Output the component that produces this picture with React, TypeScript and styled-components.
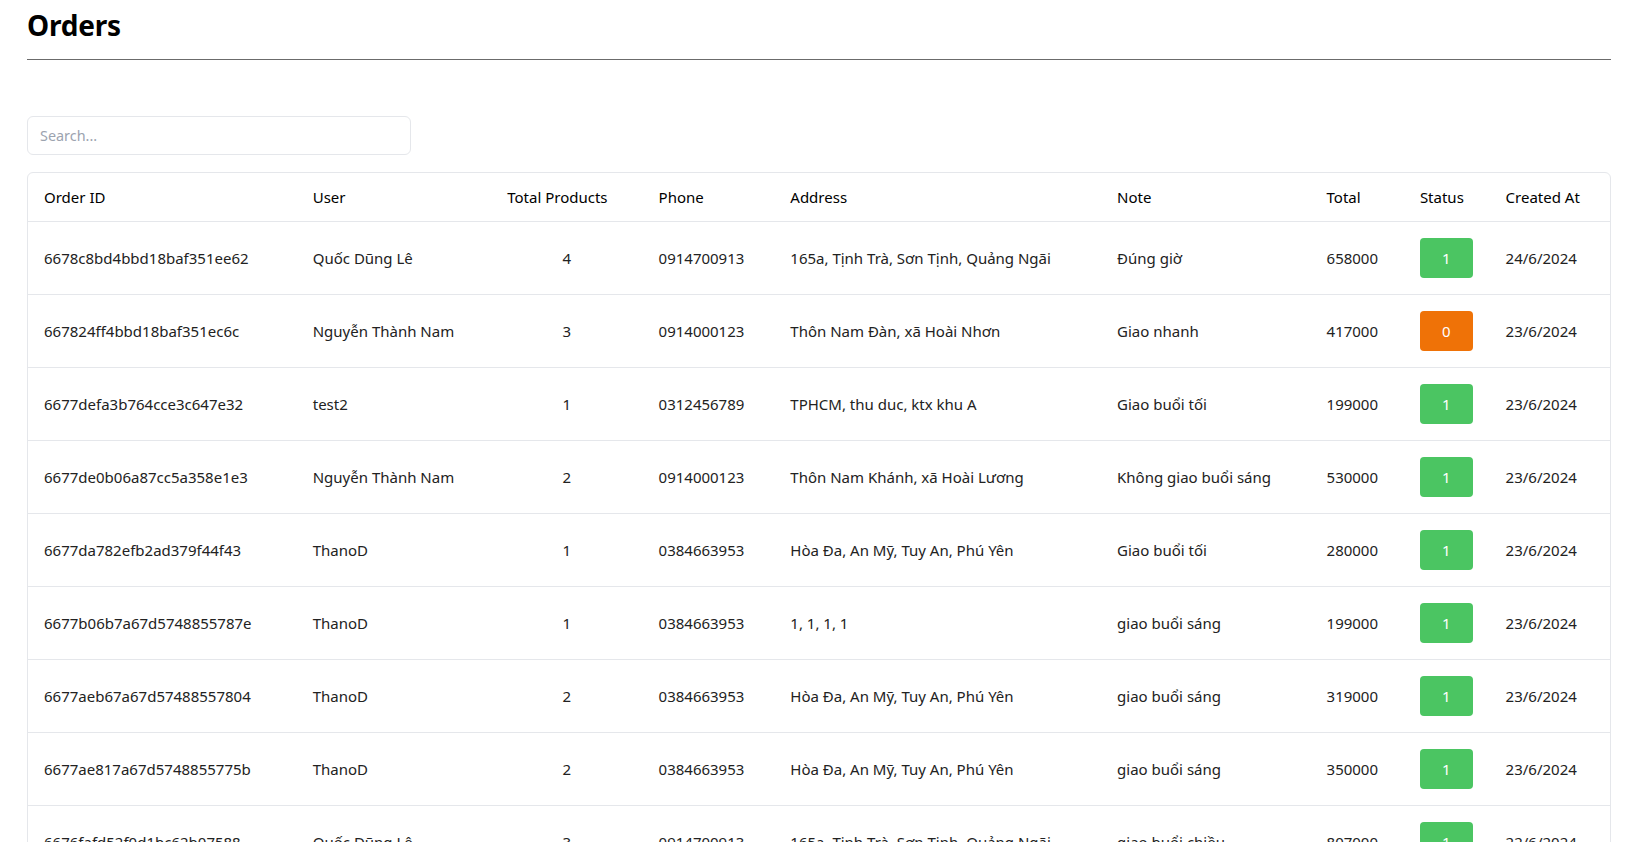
import React from "react";
import styled, { createGlobalStyle } from "styled-components";

const GlobalStyle = createGlobalStyle`
  html, body { margin: 0; padding: 0; background: #ffffff; }
  body { font-family: "Noto Sans", "Open Sans", sans-serif; color: #222; }
  ::-webkit-scrollbar { display: none; }
  * { box-sizing: border-box; }
`;

const Page = styled.main`
  padding: 7px 21px 0 27px;
  min-height: 842px;
`;

const Title = styled.h1`
  margin: 0;
  font-size: 28px;
  line-height: 36px;
  font-weight: 700;
  color: #000;
  letter-spacing: -0.2px;
`;

const Divider = styled.hr`
  margin: 16px 0 0 0;
  border: 0;
  border-top: 1px solid #6b6b6b;
  height: 0;
`;

const SearchInput = styled.input`
  display: block;
  margin-top: 56px;
  width: 384px;
  height: 39px;
  padding: 0 12px;
  border: 1px solid #e5e7eb;
  border-radius: 6px;
  font-family: "Noto Sans", sans-serif;
  font-size: 14.4px;
  color: #222;
  outline: none;
  &::placeholder { color: #9ca3af; }
`;

const TableWrap = styled.div`
  margin-top: 17px;
  border: 1px solid #e5e7eb;
  border-radius: 6px;
  overflow: hidden;
`;

const Table = styled.table`
  width: 100%;
  border-collapse: collapse;
  table-layout: fixed;
  font-size: 15px;
`;

const HeadCell = styled.th`
  text-align: left;
  font-weight: 400;
  color: #000;
  padding: 12px 16px;
  line-height: 24px;
  height: 48px;
  white-space: nowrap;
  border-bottom: 1px solid #e5e7eb;
`;

const Row = styled.tr`
  border-bottom: 1px solid #e5e7eb;
`;

const Cell = styled.td<{ $center?: boolean }>`
  padding: 16px;
  height: 72px;
  line-height: 24px;
  color: #222;
  white-space: nowrap;
  text-align: ${(p) => (p.$center ? "center" : "left")};
  vertical-align: middle;
`;

const Badge = styled.span<{ $ok: boolean }>`
  display: inline-flex;
  align-items: center;
  justify-content: center;
  width: 53px;
  height: 40px;
  border-radius: 4px;
  background: ${(p) => (p.$ok ? "#4bc562" : "#ef7207")};
  color: #fff;
  font-weight: 400;
  font-size: 15px;
`;

const widths = [268.6, 194.4, 151.3, 131.7, 326.6, 209.4, 93.3, 85.7, 120.3];
const headers = [
  "Order ID",
  "User",
  "Total Products",
  "Phone",
  "Address",
  "Note",
  "Total",
  "Status",
  "Created At",
];

type Order = {
  id: string;
  user: string;
  count: number;
  phone: string;
  address: string;
  note: string;
  total: string;
  status: number;
  date: string;
};

const orders: Order[] = [
  { id: "6678c8bd4bbd18baf351ee62", user: "Quốc Dũng Lê", count: 4, phone: "0914700913", address: "165a, Tịnh Trà, Sơn Tịnh, Quảng Ngãi", note: "Đúng giờ", total: "658000", status: 1, date: "24/6/2024" },
  { id: "667824ff4bbd18baf351ec6c", user: "Nguyễn Thành Nam", count: 3, phone: "0914000123", address: "Thôn Nam Đàn, xã Hoài Nhơn", note: "Giao nhanh", total: "417000", status: 0, date: "23/6/2024" },
  { id: "6677defa3b764cce3c647e32", user: "test2", count: 1, phone: "0312456789", address: "TPHCM, thu duc, ktx khu A", note: "Giao buổi tối", total: "199000", status: 1, date: "23/6/2024" },
  { id: "6677de0b06a87cc5a358e1e3", user: "Nguyễn Thành Nam", count: 2, phone: "0914000123", address: "Thôn Nam Khánh, xã Hoài Lương", note: "Không giao buổi sáng", total: "530000", status: 1, date: "23/6/2024" },
  { id: "6677da782efb2ad379f44f43", user: "ThanoD", count: 1, phone: "0384663953", address: "Hòa Đa, An Mỹ, Tuy An, Phú Yên", note: "Giao buổi tối", total: "280000", status: 1, date: "23/6/2024" },
  { id: "6677b06b7a67d5748855787e", user: "ThanoD", count: 1, phone: "0384663953", address: "1, 1, 1, 1", note: "giao buổi sáng", total: "199000", status: 1, date: "23/6/2024" },
  { id: "6677aeb67a67d57488557804", user: "ThanoD", count: 2, phone: "0384663953", address: "Hòa Đa, An Mỹ, Tuy An, Phú Yên", note: "giao buổi sáng", total: "319000", status: 1, date: "23/6/2024" },
  { id: "6677ae817a67d5748855775b", user: "ThanoD", count: 2, phone: "0384663953", address: "Hòa Đa, An Mỹ, Tuy An, Phú Yên", note: "giao buổi sáng", total: "350000", status: 1, date: "23/6/2024" },
  { id: "6676fafd52f0d1bc62b07588", user: "Quốc Dũng Lê", count: 3, phone: "0914700913", address: "165a, Tịnh Trà, Sơn Tịnh, Quảng Ngãi", note: "giao buổi chiều", total: "807000", status: 1, date: "22/6/2024" },
];

export default function App() {
  return (
    <>
      <GlobalStyle />
      <Page>
        <Title>Orders</Title>
        <Divider />
        <SearchInput placeholder="Search..." />
        <TableWrap>
          <Table>
            <colgroup>
              {widths.map((w, i) => (
                <col key={i} style={{ width: `${w}px` }} />
              ))}
            </colgroup>
            <thead>
              <tr>
                {headers.map((h) => (
                  <HeadCell key={h}>{h}</HeadCell>
                ))}
              </tr>
            </thead>
            <tbody>
              {orders.map((o) => (
                <Row key={o.id}>
                  <Cell>{o.id}</Cell>
                  <Cell>{o.user}</Cell>
                  <Cell $center>{o.count}</Cell>
                  <Cell>{o.phone}</Cell>
                  <Cell>{o.address}</Cell>
                  <Cell>{o.note}</Cell>
                  <Cell>{o.total}</Cell>
                  <Cell>
                    <Badge $ok={o.status === 1}>{o.status}</Badge>
                  </Cell>
                  <Cell>{o.date}</Cell>
                </Row>
              ))}
            </tbody>
          </Table>
        </TableWrap>
      </Page>
    </>
  );
}
